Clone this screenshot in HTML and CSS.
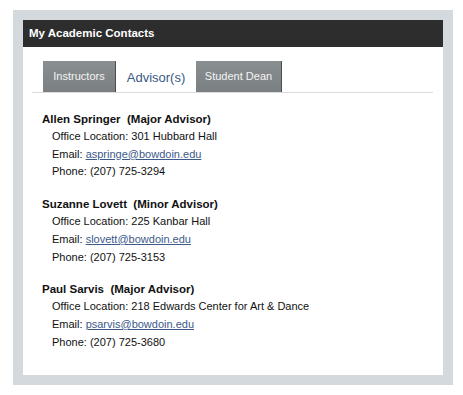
FILE: index.html
```html
<!DOCTYPE html>
<html lang="en">
<head>
    <meta charset="UTF-8">
    <title>My Academic Contacts</title>
    <link rel="stylesheet" href="styles.css">
</head>
<body>
    <section class="frame">
        <div class="panel">
            <h2 class="panel-title">My Academic Contacts</h2>

            <!-- Tabs -->
            <ul class="tabs">
                <li class="tab">Instructors</li>
                <li class="tab active">Advisor(s)</li>
                <li class="tab">Student Dean</li>
            </ul>

            <!-- Advisor list -->
            <div class="contacts">
                <div class="contact">
                    <h4>Allen Springer&nbsp; (Major Advisor)</h4>
                    <p>Office Location: 301 Hubbard Hall</p>
                    <p>Email: <a href="#">aspringe@bowdoin.edu</a></p>
                    <p>Phone: (207) 725-3294</p>
                </div>
                <div class="contact">
                    <h4>Suzanne Lovett&nbsp; (Minor Advisor)</h4>
                    <p>Office Location: 225 Kanbar Hall</p>
                    <p>Email: <a href="#">slovett@bowdoin.edu</a></p>
                    <p>Phone: (207) 725-3153</p>
                </div>
                <div class="contact">
                    <h4>Paul Sarvis&nbsp; (Major Advisor)</h4>
                    <p>Office Location: 218 Edwards Center for Art &amp; Dance</p>
                    <p>Email: <a href="#">psarvis@bowdoin.edu</a></p>
                    <p>Phone: (207) 725-3680</p>
                </div>
            </div>
        </div>
    </section>
</body>
</html>
```

FILE: styles.css
```css
* {
    margin: 0;
    padding: 0;
    box-sizing: border-box;
}

body {
    font-family: "Liberation Sans", Arial, sans-serif;
    background-color: #ffffff;
    padding: 10px 10px 10px 13px;
}

.frame {
    width: 440px;
    height: 375px;
    background-color: #d3d9dc;
    padding: 10px;
}

.panel {
    background-color: #ffffff;
    height: 355px;
}

.panel-title {
    background-color: #2d2d2d;
    color: #ffffff;
    font-size: 11.5px;
    font-weight: bold;
    height: 27px;
    line-height: 26px;
    padding-left: 6px;
}

.tabs {
    list-style-type: none;
    display: flex;
    margin: 14px 10px 0 9px;
    padding-left: 11px;
    border-bottom: 1px solid #dcdcdc;
}

.tab {
    height: 31px;
    line-height: 30px;
    font-size: 11px;
    color: #f4f4f4;
    background: linear-gradient(#898f91, #7a8082);
    border-right: 1px solid #4a4e50;
    text-align: center;
}

.tab:nth-child(1) {
    width: 73px;
}

.tab:nth-child(3) {
    width: 86px;
}

.tab.active {
    width: 80px;
    background: #ffffff;
    border-right: none;
    color: #3a5985;
    font-size: 13px;
    line-height: 33px;
}

.contacts {
    padding: 18px 0 0 19px;
}

.contact {
    margin-bottom: 15px;
}

.contact h4 {
    font-size: 11.5px;
    color: #111111;
    line-height: 17px;
}

.contact p {
    font-size: 11px;
    color: #111111;
    line-height: 17.7px;
    padding-left: 10px;
}

.contact a {
    color: #3b5a8a;
}
```
